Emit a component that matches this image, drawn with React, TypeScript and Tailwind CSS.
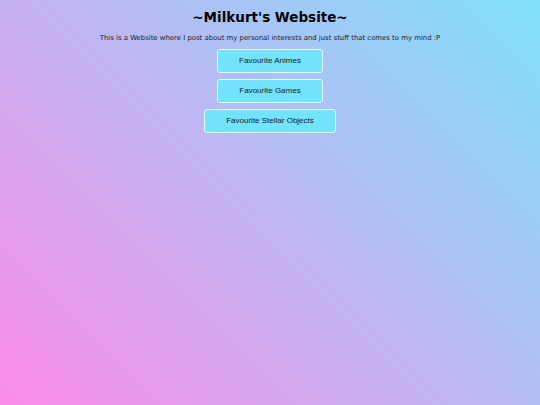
const links = ["Favourite Animes", "Favourite Games", "Favourite Stellar Objects"];

export default function App() {
  return (
    <div className="min-h-[405px] w-full bg-[linear-gradient(45deg,#fc8ce8,#7fe0fc)] flex flex-col items-center pt-[9px]">
      <h1 className="font-['DejaVu_Sans',sans-serif] font-bold text-[13.5px] leading-[16px] text-black">
        ~Milkurt's Website~
      </h1>
      <p className="mt-[9px] font-['DejaVu_Sans',sans-serif] text-[6.9px] leading-[9px] text-[#1a1a1a]">
        This is a Website where I post about my personal interests and just stuff that comes to my mind :P
      </p>
      <div className="mt-[6px] flex flex-col items-center gap-[6px]">
        {links.map((l) => (
          <button
            key={l}
            className="h-[24px] px-[21px] min-w-[106px] rounded-[3px] border border-[#e6f8ff] bg-[#72e3fc] font-['Liberation_Sans',Arial,sans-serif] text-[8px] text-[#1a1a1a]"
          >
            {l}
          </button>
        ))}
      </div>
    </div>
  );
}
